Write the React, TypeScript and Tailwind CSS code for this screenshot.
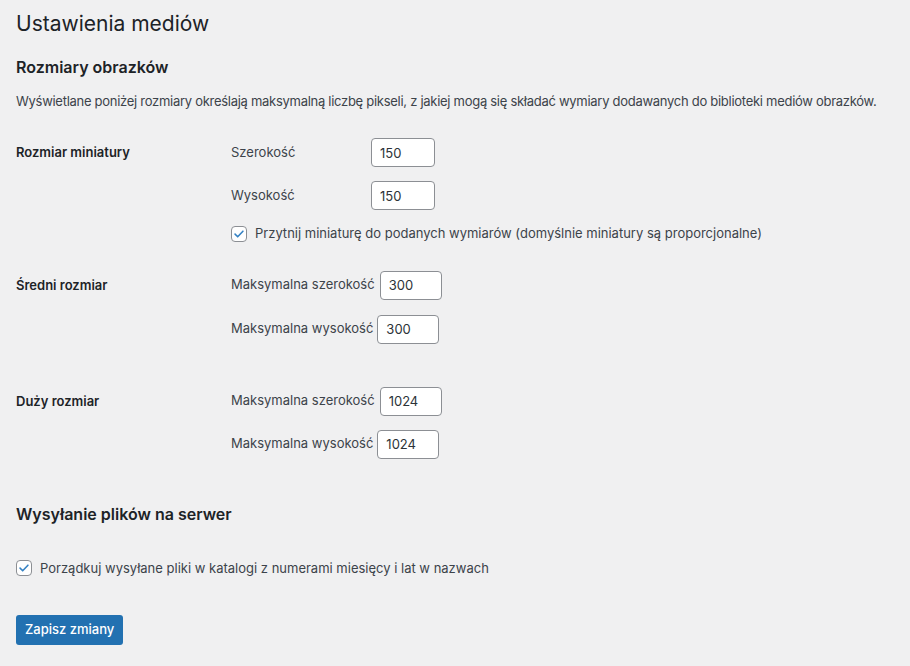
function Check() {
  return (
    <span className="flex h-4 w-4 shrink-0 items-center justify-center rounded-[4px] border border-[#8c8f94] bg-white">
      <svg viewBox="0 0 16 16" className="h-[14px] w-[14px]" fill="none">
        <path d="M3.5 8.2l3 3 6-6.4" stroke="#3582c4" strokeWidth="1.8" strokeLinecap="round" strokeLinejoin="round" />
      </svg>
    </span>
  );
}

function NumInput({ value, w }: { value: string; w: string }) {
  return (
    <input
      type="text"
      defaultValue={value}
      className={`h-[29px] ${w} rounded-[4px] border border-[#8c8f94] bg-white px-2 text-[13px] text-[#2c3338] outline-none`}
    />
  );
}

export default function App() {
  return (
    <div className="min-h-screen bg-[#f0f0f1] px-4 pb-5 text-[13px] text-[#3c434a] font-['Inter','Liberation_Sans',sans-serif]">
      <h1 className="pt-[9px] text-[21px] leading-[30px] font-normal text-[#1d2327]">Ustawienia mediów</h1>

      {/* Image sizes */}
      <h2 className="mt-[17px] text-[16px] leading-[22px] font-semibold text-[#1d2327]">Rozmiary obrazków</h2>
      <p className="mt-[14px] whitespace-nowrap leading-[18px] tracking-[-0.28px]">
        Wyświetlane poniżej rozmiary określają maksymalną liczbę pikseli, z jakiej mogą się składać wymiary dodawanych do biblioteki mediów obrazków.
      </p>

      <div className="mt-[28px] flex">
        <div className="w-[215px] shrink-0 leading-[29px] font-semibold text-[#1d2327]">Rozmiar miniatury</div>
        <div className="flex flex-col">
          <div className="flex items-center">
            <span className="w-[140px]">Szerokość</span>
            <NumInput value="150" w="w-[64px]" />
          </div>
          <div className="mt-[14px] flex items-center">
            <span className="w-[140px]">Wysokość</span>
            <NumInput value="150" w="w-[64px]" />
          </div>
          <label className="mt-[14px] flex items-center gap-2">
            <Check />
            <span>Przytnij miniaturę do podanych wymiarów (domyślnie miniatury są proporcjonalne)</span>
          </label>
        </div>
      </div>

      <div className="mt-[27px] flex">
        <div className="w-[215px] shrink-0 leading-[29px] font-semibold text-[#1d2327]">Średni rozmiar</div>
        <div className="flex flex-col">
          <div className="flex items-center gap-[5px]">
            <span>Maksymalna szerokość</span>
            <NumInput value="300" w="w-[62px]" />
          </div>
          <div className="mt-[15px] flex items-center gap-[4px]">
            <span>Maksymalna wysokość</span>
            <NumInput value="300" w="w-[62px]" />
          </div>
        </div>
      </div>

      <div className="mt-[43px] flex">
        <div className="w-[215px] shrink-0 leading-[29px] font-semibold text-[#1d2327]">Duży rozmiar</div>
        <div className="flex flex-col">
          <div className="flex items-center gap-[5px]">
            <span>Maksymalna szerokość</span>
            <NumInput value="1024" w="w-[62px]" />
          </div>
          <div className="mt-[14px] flex items-center gap-[4px]">
            <span>Maksymalna wysokość</span>
            <NumInput value="1024" w="w-[62px]" />
          </div>
        </div>
      </div>

      {/* Uploading files */}
      <h2 className="mt-[44px] text-[16px] leading-[22px] font-semibold text-[#1d2327]">Wysyłanie plików na serwer</h2>
      <label className="mt-[34px] flex items-center gap-2">
        <Check />
        <span>Porządkuj wysyłane pliki w katalogi z numerami miesięcy i lat w nazwach</span>
      </label>

      <button className="mt-[37px] h-[30px] rounded-[3px] bg-[#2271b1] px-[9px] text-[13px] font-medium text-white">
        Zapisz zmiany
      </button>
    </div>
  );
}
